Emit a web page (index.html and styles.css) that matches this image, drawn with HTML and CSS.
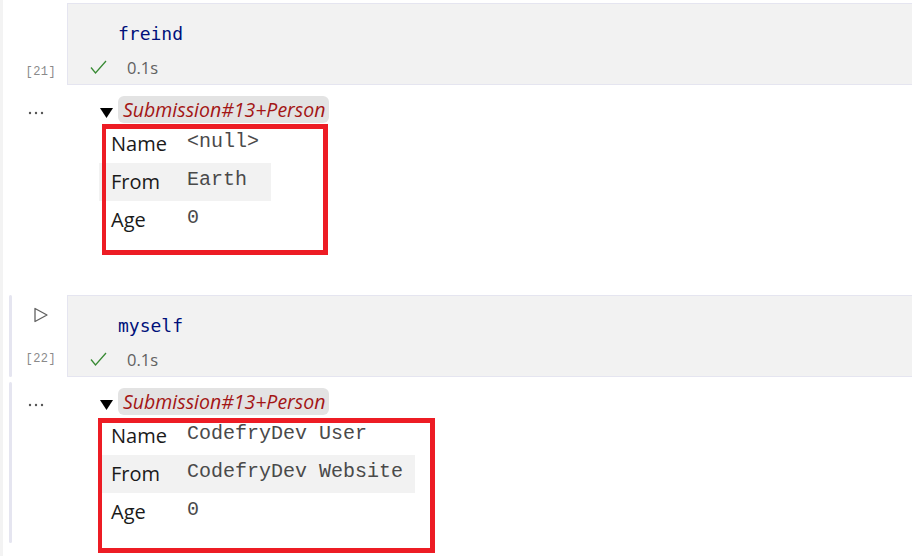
FILE: index.html
```html
<!DOCTYPE html>
<html>
<head>
<meta charset="utf-8">
<link rel="stylesheet" href="styles.css">
</head>
<body>
<div class="notebook">
  <div class="cell">
    <div class="row">
      <div class="gutter">
        <div class="bar"></div>
        <div class="gbody">
          <div class="gline1"></div>
          <div class="gline2"><span class="count">[21]</span></div>
        </div>
      </div>
      <div class="codebox">
        <div class="code">freind</div>
        <div class="status">
          <svg class="check" width="17" height="15" viewBox="0 0 17 15"><polyline points="1,7.5 5.5,13 16,1" fill="none" stroke="#388a34" stroke-width="1.3"/></svg>
          <span class="time">0.1s</span>
        </div>
      </div>
    </div>
    <div class="row">
      <div class="gutter">
        <div class="bar out"></div>
        <div class="gbody">
          <svg class="dots" width="16" height="4" viewBox="0 0 16 4"><circle cx="2" cy="2" r="1.2" fill="#555"/><circle cx="8" cy="2" r="1.2" fill="#555"/><circle cx="14" cy="2" r="1.2" fill="#555"/></svg>
        </div>
      </div>
      <div class="outbody">
        <div class="summary">
          <svg class="tri" width="13" height="10" viewBox="0 0 13 10"><polygon points="0,0 13,0 6.5,10" fill="#000"/></svg>
          <span class="tag">Submission#13+Person</span>
        </div>
        <div class="tablewrap">
          <table class="props">
            <tr><td class="k">Name</td><td class="v">&lt;null&gt;</td></tr>
            <tr class="alt"><td class="k">From</td><td class="v">Earth</td></tr>
            <tr><td class="k">Age</td><td class="v">0</td></tr>
          </table>
          <div class="redbox r1"></div>
        </div>
      </div>
    </div>
  </div>

  <div class="cell selected second">
    <div class="row">
      <div class="gutter">
        <div class="bar"></div>
        <div class="gbody">
          <div class="gline1">
            <svg class="play" width="16" height="17" viewBox="0 0 16 17"><polygon points="2,1.5 14,8 2,14.5" fill="none" stroke="#616161" stroke-width="1.3" stroke-linejoin="round"/></svg>
          </div>
          <div class="gline2"><span class="count">[22]</span></div>
        </div>
      </div>
      <div class="codebox">
        <div class="code">myself</div>
        <div class="status">
          <svg class="check" width="17" height="15" viewBox="0 0 17 15"><polyline points="1,7.5 5.5,13 16,1" fill="none" stroke="#388a34" stroke-width="1.3"/></svg>
          <span class="time">0.1s</span>
        </div>
      </div>
    </div>
    <div class="row">
      <div class="gutter">
        <div class="bar out"></div>
        <div class="gbody">
          <svg class="dots" width="16" height="4" viewBox="0 0 16 4"><circle cx="2" cy="2" r="1.2" fill="#555"/><circle cx="8" cy="2" r="1.2" fill="#555"/><circle cx="14" cy="2" r="1.2" fill="#555"/></svg>
        </div>
      </div>
      <div class="outbody">
        <div class="summary">
          <svg class="tri" width="13" height="10" viewBox="0 0 13 10"><polygon points="0,0 13,0 6.5,10" fill="#000"/></svg>
          <span class="tag">Submission#13+Person</span>
        </div>
        <div class="tablewrap">
          <table class="props">
            <tr><td class="k">Name</td><td class="v">CodefryDev User</td></tr>
            <tr class="alt"><td class="k">From</td><td class="v">CodefryDev Website</td></tr>
            <tr><td class="k">Age</td><td class="v">0</td></tr>
          </table>
          <div class="redbox r2"></div>
        </div>
      </div>
    </div>
  </div>
</div>
</body>
</html>
```
FILE: styles.css
```css
html, body {
  margin: 0;
  padding: 0;
  background: #ffffff;
}
body {
  width: 912px;
  height: 556px;
  overflow: hidden;
}
.notebook {
  border-left: 3px solid #f3f3f3;
  padding-top: 3px;
  height: 553px;
  font-family: "Open Sans", "Noto Sans", sans-serif;
}
.cell.second {
  margin-top: 44px;
}
.row {
  display: grid;
  grid-template-columns: 64px 1fr;
}
.gutter {
  display: flex;
  padding-left: 6px;
}
.bar {
  width: 3px;
  flex: none;
  border-radius: 2px;
}
.bar.out {
  margin-top: 5px;
}
.cell.selected .bar {
  background: #e5e5f0;
}
.gbody {
  flex: 1;
  padding-top: 17px;
}
.gline1 {
  height: 28px;
}
.play {
  display: block;
  margin-top: -5px;
  margin-left: 21px;
}
.gline2 {
  margin-top: 8px;
  height: 24px;
  text-align: right;
  padding-right: 11px;
  padding-top: 2px;
  box-sizing: border-box;
}
.count {
  font-family: "Liberation Mono", monospace;
  font-size: 12px;
  line-height: 16px;
  color: #8a8a8a;
  letter-spacing: 0.4px;
}
.dots {
  display: block;
  margin-left: 16px;
  margin-top: 9px;
}
.codebox {
  background: #f2f2f2;
  border: 1px solid #e5e5f0;
  border-right: none;
  height: 82px;
  box-sizing: border-box;
  padding-top: 16px;
}
.code {
  font-family: "DejaVu Sans Mono", monospace;
  font-size: 18px;
  line-height: 28px;
  height: 28px;
  color: #00107a;
  padding-left: 50px;
}
.status {
  margin-top: 8px;
  height: 24px;
  display: flex;
  align-items: center;
  padding-left: 22px;
}
.check {
  display: block;
  margin-top: -1px;
}
.time {
  margin-left: 20px;
  font-size: 16.5px;
  line-height: 24px;
  color: #616161;
}
.outbody {
  padding-left: 32px;
  padding-top: 11px;
  padding-bottom: 12px;
}
.summary {
  display: flex;
  align-items: flex-start;
  height: 27px;
  margin-bottom: 2px;
}
.tri {
  display: block;
  margin-left: 1px;
  margin-top: 12px;
}
.tag {
  margin-left: 5px;
  background: #e3e3e3;
  border-radius: 6px;
  padding: 0 4px 0 5px;
  height: 27px;
  line-height: 28px;
  font-size: 19.5px;
  font-style: italic;
  color: #a31515;
}
.tablewrap {
  position: relative;
  display: inline-block;
  vertical-align: top;
}
.props {
  border-collapse: collapse;
  border-spacing: 0;
  table-layout: auto;
}
.props td {
  height: 38px;
  padding: 0 12px;
  vertical-align: top;
  box-sizing: border-box;
}
.props tr.alt td {
  background: #f2f2f2;
}
.props .k {
  width: 76px;
  min-width: 76px;
  max-width: 76px;
  padding-right: 0;
  font-size: 20px;
  line-height: 38px;
  color: #1a1a1a;
  white-space: nowrap;
}
.props .v {
  font-family: "Liberation Mono", monospace;
  font-size: 20px;
  padding-top: 5px;
  color: #4a4a4a;
  white-space: pre;
}
.redbox {
  position: absolute;
  box-sizing: border-box;
  border: 4px solid #ed1c24;
  border-width: 5px 5px 5px 4px;
}
.redbox.r1 {
  left: 3px;
  top: -1px;
  width: 226px;
  height: 131px;
}
.redbox.r2 {
  left: -1px;
  top: 1px;
  width: 337px;
  height: 135px;
}
```
